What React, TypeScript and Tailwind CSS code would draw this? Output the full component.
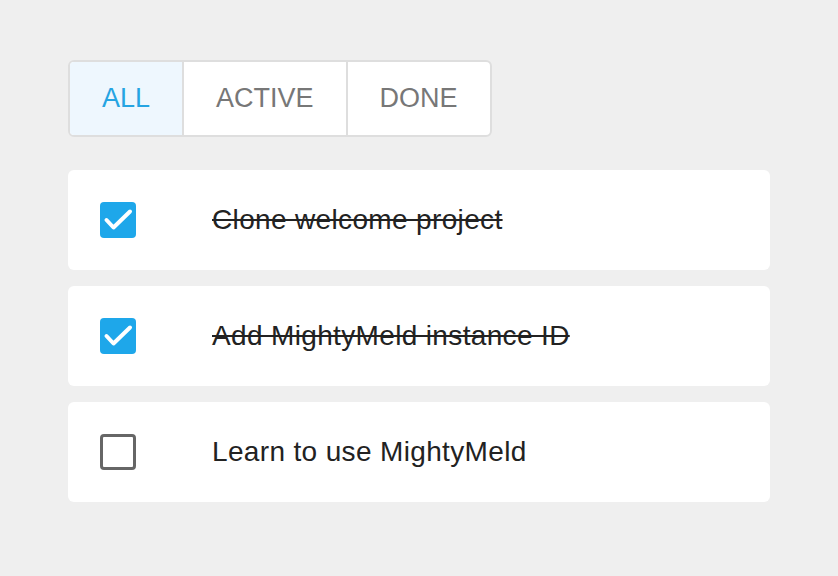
import React, { useState } from "react";

const initialTodos = [
  { id: 1, title: "Clone welcome project", done: true },
  { id: 2, title: "Add MightyMeld instance ID", done: true },
  { id: 3, title: "Learn to use MightyMeld", done: false },
];

const filters = ["ALL", "ACTIVE", "DONE"];

function CheckBox({ checked }: { checked: boolean }) {
  if (checked) {
    return (
      <div className="w-9 h-9 rounded-[4px] bg-[#1ea7ea]">
        <svg width="36" height="36" viewBox="0 0 36 36" fill="none" stroke="white" strokeWidth="4" strokeLinecap="round" strokeLinejoin="round">
          <path d="M6.5 18l7 7.5L30 9.5" />
        </svg>
      </div>
    );
  }
  return <div className="w-9 h-9 rounded-[4px] border-[3px] border-[#666]" />;
}

export default function App() {
  const [filter, setFilter] = useState("ALL");
  const [todos] = useState(initialTodos);

  return (
    <div className="min-h-screen bg-[#efefef] pt-[60px] px-[68px] font-['Liberation_Sans',Arial,sans-serif]">
      <div className="flex w-fit rounded-[6px] border-2 border-[#dedede] bg-white overflow-hidden">
        {filters.map((f, i) => (
          <button
            key={f}
            onClick={() => setFilter(f)}
            className={
              "h-[73px] px-8 text-[27px] " +
              (i > 0 ? "border-l-2 border-[#dedede] " : "") +
              (filter === f ? "bg-[#eef7fe] text-[#25a4e2]" : "text-[#777]")
            }
          >
            {f}
          </button>
        ))}
      </div>

      <div className="mt-[33px] w-[702px] flex flex-col gap-4">
        {todos.map((t) => (
          <div key={t.id} className="h-[100px] bg-white rounded-[6px] flex items-center pl-8">
            <CheckBox checked={t.done} />
            <span className={"ml-[76px] text-[28px] tracking-[0.35px] text-[#222] " + (t.done ? "line-through" : "")}>{t.title}</span>
          </div>
        ))}
      </div>
    </div>
  );
}
